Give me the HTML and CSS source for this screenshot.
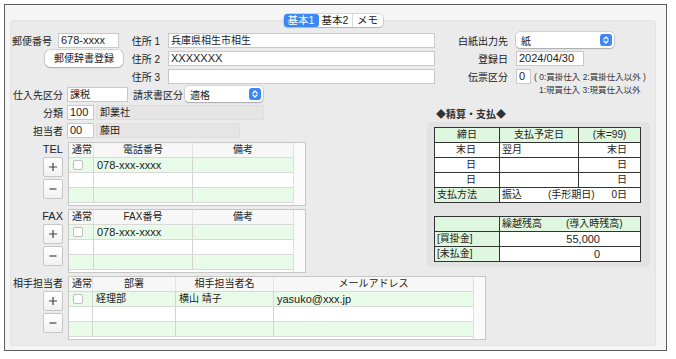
FILE: index.html
```html
<!DOCTYPE html>
<html lang="ja">
<head>
    <meta charset="UTF-8">
    <title>仕入先登録</title>
    <link rel="stylesheet" href="styles.css">
</head>
<body>
    <div class="window">
        <div class="tabs">
            <div class="seg">
                <span class="tab on t1">基本1</span>
                <span class="tab t2">基本2</span>
                <span class="tab t3">メモ</span>
            </div>
        </div>

        <div class="panel">
            <div class="top">
                <div class="left">
                    <div class="row">
                        <span class="lbl zip-lbl">郵便番号</span>
                        <span class="field en zip">678-xxxx</span>
                        <span class="lbl addr-lbl">住所 1</span>
                        <span class="field addr">兵庫県相生市相生</span>
                    </div>
                    <div class="row">
                        <span class="btn-dict">郵便辞書登録</span>
                        <span class="lbl addr2-lbl">住所 2</span>
                        <span class="field en addr">XXXXXXX</span>
                    </div>
                    <div class="row">
                        <span class="lbl addr3-lbl">住所 3</span>
                        <span class="field addr"></span>
                    </div>
                    <div class="row">
                        <span class="lbl kbn-lbl">仕入先区分</span>
                        <span class="field tax">課税</span>
                        <span class="lbl inv-lbl">請求書区分</span>
                        <span class="select inv">適格
                            <svg class="stepper" viewBox="0 0 12 12" width="12" height="12"><rect width="12" height="12" rx="3" fill="#3b88f4"/><path d="M4 5 L6 3 L8 5 M4 7 L6 9 L8 7" fill="none" stroke="#fff" stroke-width="1.3" stroke-linecap="round" stroke-linejoin="round"/></svg>
                        </span>
                    </div>
                    <div class="row">
                        <span class="lbl kbn-lbl">分類</span>
                        <span class="field en code">100</span>
                        <span class="info cat">卸業社</span>
                    </div>
                    <div class="row">
                        <span class="lbl kbn-lbl">担当者</span>
                        <span class="field en code">00</span>
                        <span class="info staff">藤田</span>
                    </div>

                    <div class="block">
                        <div class="side">
                            <span class="cap en">TEL</span>
                            <span class="pm"><svg viewBox="0 0 10 10" width="10" height="10"><path d="M5 1v8M1 5h8" stroke="#444" stroke-width="1.2"/></svg></span>
                            <span class="pm"><svg viewBox="0 0 10 10" width="10" height="10"><path d="M1.5 5h7" stroke="#444" stroke-width="1.2"/></svg></span>
                        </div>
                        <div class="tbl">
                            <div class="tbl-body tel">
                                <div class="tbl-head"><span class="c-left">通常</span><span>電話番号</span><span>備考</span></div>
                                <div class="tbl-row g"><span><i class="chk"></i></span><span class="en">078-xxx-xxxx</span><span></span></div>
                                <div class="tbl-row"><span></span><span></span><span></span></div>
                                <div class="tbl-row g"><span></span><span></span><span></span></div>
                            </div>
                            <div class="track"></div>
                        </div>
                    </div>

                    <div class="block">
                        <div class="side">
                            <span class="cap en">FAX</span>
                            <span class="pm"><svg viewBox="0 0 10 10" width="10" height="10"><path d="M5 1v8M1 5h8" stroke="#444" stroke-width="1.2"/></svg></span>
                            <span class="pm"><svg viewBox="0 0 10 10" width="10" height="10"><path d="M1.5 5h7" stroke="#444" stroke-width="1.2"/></svg></span>
                        </div>
                        <div class="tbl">
                            <div class="tbl-body tel">
                                <div class="tbl-head"><span class="c-left">通常</span><span>FAX番号</span><span>備考</span></div>
                                <div class="tbl-row g"><span><i class="chk"></i></span><span class="en">078-xxx-xxxx</span><span></span></div>
                                <div class="tbl-row"><span></span><span></span><span></span></div>
                                <div class="tbl-row g"><span></span><span></span><span></span></div>
                            </div>
                            <div class="track"></div>
                        </div>
                    </div>
                </div>

                <div class="right">
                    <div class="row">
                        <span class="lbl rlbl">白紙出力先</span>
                        <span class="select paper">紙
                            <svg class="stepper" viewBox="0 0 12 12" width="12" height="12"><rect width="12" height="12" rx="3" fill="#3b88f4"/><path d="M4 5 L6 3 L8 5 M4 7 L6 9 L8 7" fill="none" stroke="#fff" stroke-width="1.3" stroke-linecap="round" stroke-linejoin="round"/></svg>
                        </span>
                    </div>
                    <div class="row">
                        <span class="lbl rlbl">登録日</span>
                        <span class="field en date">2024/04/30</span>
                    </div>
                    <div class="row">
                        <span class="lbl rlbl">伝票区分</span>
                        <span class="field en slip">0</span>
                        <span class="hint">( 0:買掛仕入 2:買掛仕入以外 )</span>
                    </div>
                    <div class="row hint2">
                        <span class="hint">1:現買仕入 3:現買仕入以外</span>
                    </div>

                    <div class="calc-title">◆精算・支払◆</div>
                    <div class="calc">
                        <div class="sheet pay">
                            <span class="g mid">締日</span><span class="g mid">支払予定日</span><span class="g mid">(末=99)</span>
                            <span class="day">末日</span><span>翌月</span><span class="day2">末日</span>
                            <span class="day">日</span><span></span><span class="day2">日</span>
                            <span class="day">日</span><span></span><span class="day2">日</span>
                            <span class="g">支払方法</span>
                            <span class="wide"><b>振込</b><b class="bill">(手形期日)</b><b class="days">0日</b></span>
                        </div>
                        <div class="sheet bal">
                            <span class="g"></span><span class="g split"><b>繰越残高</b><b class="intro">(導入時残高)</b></span>
                            <span class="g">[買掛金]</span><span class="amt en">55,000</span>
                            <span class="g">[未払金]</span><span class="amt en">0</span>
                        </div>
                    </div>
                </div>
            </div>

            <div class="block">
                <div class="side">
                    <span class="cap">相手担当者</span>
                    <span class="pm"><svg viewBox="0 0 10 10" width="10" height="10"><path d="M5 1v8M1 5h8" stroke="#444" stroke-width="1.2"/></svg></span>
                    <span class="pm"><svg viewBox="0 0 10 10" width="10" height="10"><path d="M1.5 5h7" stroke="#444" stroke-width="1.2"/></svg></span>
                </div>
                <div class="tbl">
                    <div class="tbl-body contact">
                        <div class="tbl-head"><span class="c-left">通常</span><span>部署</span><span>相手担当者名</span><span>メールアドレス</span></div>
                        <div class="tbl-row g"><span><i class="chk"></i></span><span>経理部</span><span>横山 靖子</span><span class="en">yasuko@xxx.jp</span></div>
                        <div class="tbl-row"><span></span><span></span><span></span><span></span></div>
                        <div class="tbl-row g"><span></span><span></span><span></span><span></span></div>
                    </div>
                    <div class="track"></div>
                </div>
            </div>
        </div>
    </div>
</body>
</html>
```

FILE: styles.css
```css
* {
    margin: 0;
    padding: 0;
    box-sizing: border-box;
}

body {
    font-family: "Liberation Sans", "Noto Sans CJK JP", sans-serif;
    font-size: 10px;
    color: #222;
    background: #fff;
}

b {
    font-weight: normal;
}

.en {
    font-size: 11px;
}

.window {
    margin: 4px 0 0 4px;
    width: 663px;
    height: 347px;
    border: 1px solid #5c5c5c;
    background: #f5f5f5;
    padding: 9px 0 0 5px;
}

/* tabs */
.tabs {
    position: relative;
    z-index: 1;
    display: flex;
    justify-content: center;
    width: 646px;
}

.seg {
    display: flex;
    height: 13px;
    background: #fff;
    border-radius: 4px;
    box-shadow: 0 0 0 0.5px rgba(0, 0, 0, 0.25), 0 1px 1px rgba(0, 0, 0, 0.12);
}

.tab {
    line-height: 13px;
    text-align: center;
    font-size: 10.5px;
}

.tab.on {
    background: #3b88f4;
    color: #fff;
    border-radius: 3px;
}

.t1 { width: 35px; }
.t2 { width: 34px; border-right: 1px solid #dcdcdc; }
.t3 { width: 30px; }

.panel {
    margin-top: -7px;
    width: 646px;
    height: 326px;
    background: #ebebeb;
    border-radius: 4px;
    box-shadow: inset 0 0 0 1px #e3e3e3;
    padding-top: 11px;
}

.top {
    display: flex;
}

.left {
    width: 426px;
    flex: none;
}

.right {
    width: 220px;
    flex: none;
}

/* form rows */
.row {
    display: flex;
    align-items: center;
    height: 18px;
}

.lbl {
    flex: none;
    text-align: right;
    white-space: nowrap;
}

.field {
    flex: none;
    height: 15px;
    background: #fff;
    border: 1px solid #c9c9c9;
    padding: 0 2px;
    line-height: 13px;
    overflow: hidden;
    white-space: nowrap;
}

.select {
    flex: none;
    display: flex;
    align-items: center;
    justify-content: space-between;
    height: 16px;
    background: #fff;
    border-radius: 4px;
    padding: 0 2px 0 5px;
    box-shadow: 0 0 0 0.5px rgba(0, 0, 0, 0.2), 0 1px 1.5px rgba(0, 0, 0, 0.2);
}

.info {
    flex: none;
    height: 15px;
    margin-left: 2px;
    background: #e5e5e5;
    border: 1px solid #dedede;
    border-radius: 2px;
    padding-left: 3px;
    line-height: 13px;
}

.btn-dict {
    flex: none;
    width: 78px;
    height: 17px;
    margin-left: 35px;
    background: #fff;
    border-radius: 5px;
    box-shadow: 0 0 0 0.5px rgba(0, 0, 0, 0.2), 0 1px 1.5px rgba(0, 0, 0, 0.2);
    text-align: center;
    line-height: 17px;
}

.zip-lbl { width: 48px; padding-right: 6px; }
.zip { width: 61px; }
.addr-lbl { width: 49px; padding-right: 8px; }
.addr2-lbl { width: 45px; padding-right: 8px; }
.addr3-lbl { width: 158px; padding-right: 8px; }
.addr { width: 267px; }
.kbn-lbl { width: 57px; padding-right: 4px; }
.tax { width: 61px; }
.inv-lbl { width: 57px; padding-right: 2px; }
.inv { width: 78px; }
.code { width: 27px; }
.cat { width: 168px; }
.staff { width: 144px; }

.rlbl { width: 80px; padding-right: 8px; }
.paper { width: 98px; }
.date { width: 68px; }
.slip { width: 15px; }

.hint {
    font-size: 8.5px;
    color: #333;
    margin-left: 3px;
    white-space: nowrap;
}

.hint2 {
    align-items: flex-start;
    padding-left: 100px;
    line-height: 10px;
}

/* sub tables */
.block {
    display: flex;
    margin-top: 3px;
}

.side {
    flex: none;
    width: 58px;
    display: flex;
    flex-direction: column;
    align-items: flex-end;
    padding-right: 5px;
}

.cap {
    height: 15px;
    line-height: 15px;
    white-space: nowrap;
}

.pm {
    display: flex;
    align-items: center;
    justify-content: center;
    width: 20px;
    height: 20px;
    margin-bottom: 2px;
    background: linear-gradient(#fff, #f1f1f1);
    border: 1px solid #c6c6c6;
    border-radius: 2px;
}

.tbl {
    display: flex;
    height: 64px;
    border: 1px solid #c6c6c6;
    background: #fff;
}

.tbl-body {
    flex: none;
}

.tel .tbl-head,
.tel .tbl-row {
    grid-template-columns: 25px 99px 100px;
}

.contact .tbl-head,
.contact .tbl-row {
    grid-template-columns: 24px 83px 98px 199px;
}

.tbl-head,
.tbl-row {
    display: grid;
}

.tbl-head {
    height: 14px;
    background: #f7f7f7;
}

.tbl-head span {
    text-align: center;
    line-height: 14px;
    border-right: 1px solid #e2e2e2;
    white-space: nowrap;
}

.tbl-head .c-left {
    text-align: left;
    padding-left: 3px;
}

.tbl-row {
    height: 15px;
    border-top: 1px solid #d9d9d9;
}

.tbl-row:last-child {
    border-bottom: 1px solid #d9d9d9;
    height: 16px;
}

.tbl-row.g {
    background: #e8fbe8;
}

.tbl-row span {
    border-right: 1px solid #d4d4d4;
    padding-left: 3px;
    line-height: 14px;
    overflow: hidden;
    white-space: nowrap;
}

.tbl-row span:last-child,
.tbl-head span:last-child {
    border-right: 0;
}

.chk {
    display: block;
    width: 10px;
    height: 10px;
    margin: 2px 0 0 1px;
    background: #fff;
    border: 1px solid #bdbdbd;
    border-radius: 2px;
}

.track {
    width: 12px;
    border-left: 1px solid #e0e0e0;
    background: #fafafa;
}

/* settlement */
.calc-title {
    margin-top: 5px;
    height: 14px;
    line-height: 14px;
    font-weight: bold;
    color: #333;
}

.calc {
    width: 223px;
    height: 145px;
    margin-left: -9px;
    padding: 5px 0 0 7px;
    background: #e3e3e3;
    border-radius: 4px;
}

.sheet {
    display: grid;
    gap: 1px;
    padding: 1px;
    width: 207px;
    background: #333;
}

.sheet > span {
    background: #fff;
    line-height: 14px;
    padding: 0 2px;
    white-space: nowrap;
}

.sheet > .g {
    background: #dff6df;
}

.pay {
    grid-template-columns: 64px 78px 61px;
    grid-template-rows: repeat(5, 14px);
}

.bal {
    margin-top: 13px;
    grid-template-columns: 64px 140px;
    grid-template-rows: repeat(3, 14px);
}

.mid { text-align: center; }
.day { text-align: right; padding-right: 23px !important; }
.day2 { text-align: right; padding-right: 13px !important; }

.wide {
    grid-column: span 2;
    display: flex;
}

.bill { margin-left: 26px; }
.days { margin-left: auto; padding-right: 11px; }

.split { display: flex; }
.intro { margin-left: 24px; }

.amt {
    text-align: right;
    padding-right: 40px !important;
}
```
